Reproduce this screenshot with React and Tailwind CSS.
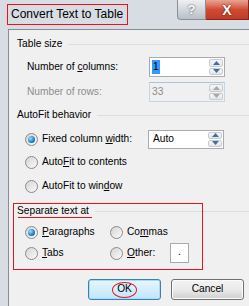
import React from "react";

const Radio = ({ checked }) => (
  <span className="flex h-[13px] w-[13px] shrink-0 items-center justify-center rounded-full border border-[#8a8a8a] bg-gradient-to-br from-[#d4d4d4] to-[#fbfbfb]">
    {checked && (
      <span className="h-[7px] w-[7px] rounded-full bg-[radial-gradient(circle_at_35%_35%,#9fe0ff,#1a7bc4_60%,#0a4f8f)]" />
    )}
  </span>
);

const Spinner = ({ disabled }) => {
  const arrow = disabled ? "#a8a8a8" : "#3f6fa8";
  return (
    <div className="flex w-[15px] flex-col gap-[1px] self-stretch py-[1px] pr-[1px]">
      <div className="flex flex-1 items-center justify-center rounded-[2px] border border-[#c9cbcf] bg-gradient-to-b from-[#f7f7f7] to-[#e3e5e8]">
        <svg width="7" height="4" viewBox="0 0 7 4">
          <path d="M0 4 L3.5 0 L7 4 Z" fill={arrow} />
        </svg>
      </div>
      <div className="flex flex-1 items-center justify-center rounded-[2px] border border-[#c9cbcf] bg-gradient-to-b from-[#f7f7f7] to-[#e3e5e8]">
        <svg width="7" height="4" viewBox="0 0 7 4">
          <path d="M0 0 L3.5 4 L7 0 Z" fill={arrow} />
        </svg>
      </div>
    </div>
  );
};

const SpinBox = ({ value, disabled, selected }) => (
  <div
    className={`flex h-[20px] w-[76px] items-center border ${
      disabled ? "border-[#c6d6e8] border-t-[#a9c5e4] bg-[#f0f0f0]" : "border-[#a8acb2] bg-white"
    }`}
  >
    <div className="flex flex-1 items-center pl-[2px]">
      <span
        className={
          selected
            ? "bg-[#3399ff] px-[1px] py-[2px] text-black"
            : disabled
            ? "text-[#8d8d8d]"
            : "text-black"
        }
      >
        {value}
      </span>
    </div>
    <Spinner disabled={disabled} />
  </div>
);

const Group = ({ title, children }) => (
  <div className="flex flex-col">
    <div className="flex h-[14px] items-center pl-[8px]">
      <span className="whitespace-nowrap">{title}</span>
      <div className="ml-[6px] h-px flex-1 bg-[#d5dfe5]" />
    </div>
    {children}
  </div>
);

const RadioRow = ({ checked, children, className = "" }) => (
  <div className={`flex h-[20px] items-center gap-[4px] ${className}`}>
    <Radio checked={checked} />
    <span className="whitespace-nowrap">{children}</span>
  </div>
);

export default function App() {
  return (
    <div className="relative h-[306px] w-[249px] overflow-hidden bg-[#d8dde4] font-['Liberation_Sans',sans-serif] text-[10.2px] leading-none text-black">
      {/* title bar */}
      <div className="flex h-[29px] items-start">
        <div className="whitespace-nowrap pl-[11px] pt-[8px] text-[12px] text-black">Convert Text to Table</div>
        <div className="ml-auto flex">
          <div className="flex h-[20px] w-[29px] items-center justify-center rounded-bl-[4px] border border-t-0 border-[#8b9097] bg-gradient-to-b from-[#eef0f3] to-[#b9bfc7] text-[13px] font-bold text-white [text-shadow:0_0_2px_#333]">
            ?
          </div>
          <div className="flex h-[20px] w-[43px] items-center justify-center border border-t-0 border-l-0 border-[#7c2a22] bg-gradient-to-b from-[#e8a493] via-[#cf4b34] to-[#c23a24] text-[14px] font-bold text-white [text-shadow:0_0_2px_#4a0d05]">
            X
          </div>
        </div>
      </div>

      {/* client area */}
      <div className="ml-[8px] flex h-[277px] flex-col border-l border-t border-[#878d94] bg-[#f0f0f0] pt-[7px]">
        <Group title="Table size">
          <div className="mt-[6px] flex h-[20px] items-center pl-[18px]">
            <span className="w-[122px] whitespace-nowrap">
              Number of <u>c</u>olumns:
            </span>
            <SpinBox value="1" selected />
          </div>
          <div className="mt-[5px] flex h-[20px] items-center pl-[18px] text-[#8d8d8d]">
            <span className="w-[122px] whitespace-nowrap">Number of rows:</span>
            <SpinBox value="33" disabled />
          </div>
        </Group>

        <div className="mt-[6px]">
          <Group title="AutoFit behavior">
            <div className="mt-[7px] flex items-center pl-[16px]">
              <RadioRow checked className="w-[123px]">
                Fixed column <u>w</u>idth:
              </RadioRow>
              <div className="flex h-[19px] w-[76px] items-center border border-[#a8acb2] bg-white">
                <span className="flex-1 pl-[4px]">Auto</span>
                <Spinner />
              </div>
            </div>
            <div className="mt-[3px] pl-[16px]">
              <RadioRow>
                Auto<u>F</u>it to contents
              </RadioRow>
            </div>
            <div className="mt-[4px] pl-[16px]">
              <RadioRow>
                AutoFit to win<u>d</u>ow
              </RadioRow>
            </div>
          </Group>
        </div>

        <div className="mt-[7px] pt-[1px]">
          <Group title="Separate text at">
            <div className="mt-[4px] flex pl-[16px]">
              <RadioRow checked className="w-[85px]">
                <u>P</u>aragraphs
              </RadioRow>
              <RadioRow>
                Co<u>m</u>mas
              </RadioRow>
            </div>
            <div className="mt-[1px] flex pl-[16px]">
              <RadioRow className="w-[85px]">
                <u>T</u>abs
              </RadioRow>
              <RadioRow className="w-[60px]">
                <u>O</u>ther:
              </RadioRow>
              <div className="flex h-[20px] w-[19px] items-end justify-center border border-[#a8acb2] bg-white pb-[5px]">
                .
              </div>
            </div>
          </Group>
        </div>

        <div className="mt-[16px] flex gap-[10px] pl-[79px]">
          <div className="flex h-[21px] w-[73px] items-center justify-center rounded-[3px] border border-[#3c7fb1] bg-gradient-to-b from-[#eaf6fd] to-[#bee6fd] shadow-[inset_0_0_0_1px_#a8dcf6]">
            OK
          </div>
          <div className="flex h-[21px] w-[73px] items-center justify-center rounded-[3px] border border-[#707070] bg-gradient-to-b from-[#f2f2f2] via-[#ebebeb] to-[#cfcfcf] shadow-[inset_0_0_0_1px_#fcfcfc]">
            Cancel
          </div>
        </div>
      </div>

      {/* red annotations */}
      <div className="absolute left-[7px] top-[4px] h-[21px] w-[121px] border border-[#e8131d]" />
      <div className="absolute left-[13px] top-[203px] h-[67px] w-[190px] border border-[#e8131d]" />
      <div className="absolute left-[18px] top-[217px] h-px w-[74px] bg-[#e8131d]" />
      <div className="absolute left-[112px] top-[282px] h-[16px] w-[25px] rounded-[50%] border border-[#e8131d]" />
    </div>
  );
}
